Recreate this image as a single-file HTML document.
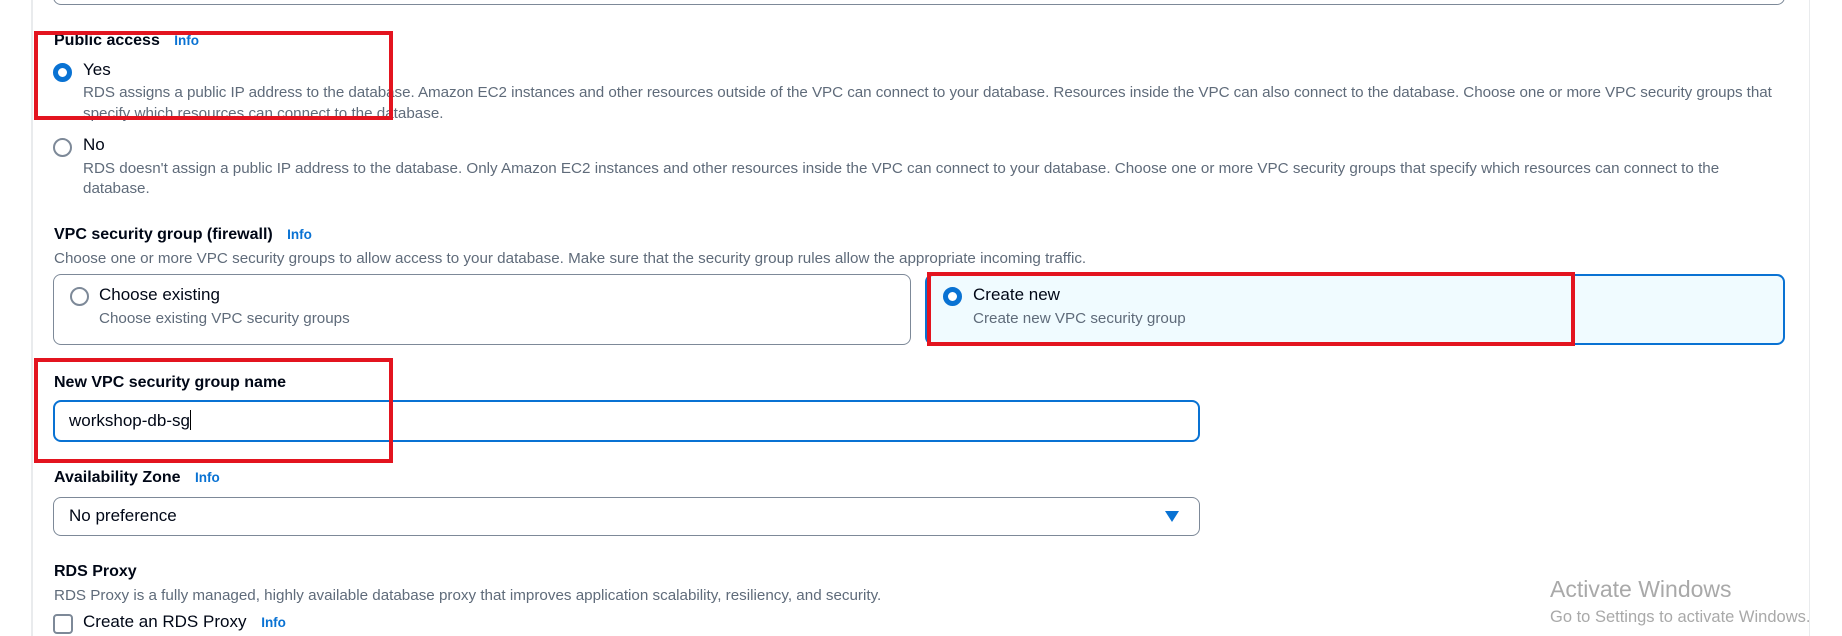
<!DOCTYPE html>
<html><head><meta charset="utf-8"><style>
*{margin:0;padding:0;box-sizing:border-box}
body{width:1842px;height:636px;overflow:hidden;background:#fff;font-family:"Liberation Sans",sans-serif;color:#000716;position:relative}
.a{position:absolute;white-space:nowrap}
.h{font-weight:bold;font-size:16px}
.info{color:#0972d3;font-weight:bold;font-size:13.5px}
.d{font-size:15.2px;color:#5f6b7a}
.l{font-size:17px}
.radio{position:absolute;width:19px;height:19px;border-radius:50%;border:2px solid #7d8998;background:#fff}
.radio.on{border:5.5px solid #0972d3}
.red{position:absolute;border:4px solid #e3141f}
</style></head><body>
<div class="a" style="left:31px;top:0;width:2px;height:636px;background:#e9ebed"></div>
<div class="a" style="left:1809px;top:0;width:1px;height:636px;background:#e9ebed"></div>
<div class="a" style="left:53px;top:-20px;width:1732px;height:25px;border:1px solid #7d8998;border-top:none;border-radius:0 0 8px 8px"></div>

<div class="a h" style="left:54px;top:32px">Public access <span class="info" style="margin-left:10px">Info</span></div>
<div class="radio on" style="left:53px;top:63px"></div>
<div class="a l" style="left:83px;top:60px">Yes</div>
<div class="a d" style="left:83px;top:84px;letter-spacing:-0.05px">RDS assigns a public IP address to the database. Amazon EC2 instances and other resources outside of the VPC can connect to your database. Resources inside the VPC can also connect to the database. Choose one or more VPC security groups that</div>
<div class="a d" style="left:83px;top:105px">specify which resources can connect to the database.</div>

<div class="radio" style="left:53px;top:138px"></div>
<div class="a l" style="left:83px;top:135px">No</div>
<div class="a d" style="left:83px;top:160px">RDS doesn't assign a public IP address to the database. Only Amazon EC2 instances and other resources inside the VPC can connect to your database. Choose one or more VPC security groups that specify which resources can connect to the</div>
<div class="a d" style="left:83px;top:180px">database.</div>

<div class="a h" style="left:54px;top:226px">VPC security group (firewall) <span class="info" style="margin-left:10px">Info</span></div>
<div class="a d" style="left:54px;top:250px">Choose one or more VPC security groups to allow access to your database. Make sure that the security group rules allow the appropriate incoming traffic.</div>

<div class="a" style="left:53px;top:274px;width:858px;height:71px;border:1px solid #7d8998;border-radius:8px"></div>
<div class="radio" style="left:70px;top:287px"></div>
<div class="a l" style="left:99px;top:285px">Choose existing</div>
<div class="a d" style="left:99px;top:310px">Choose existing VPC security groups</div>

<div class="a" style="left:925px;top:274px;width:860px;height:71px;border:2px solid #0972d3;border-radius:8px;background:#f0fbff"></div>
<div class="radio on" style="left:943px;top:287px"></div>
<div class="a l" style="left:973px;top:285px">Create new</div>
<div class="a d" style="left:973px;top:310px">Create new VPC security group</div>

<div class="a h" style="left:54px;top:374px">New VPC security group name</div>
<div class="a" style="left:53px;top:400px;width:1147px;height:42px;border:2px solid #0972d3;border-radius:8px"></div>
<div class="a l" style="left:69px;top:410px">workshop-db-sg<span style="display:inline-block;width:1px;height:20px;background:#000;vertical-align:-4px"></span></div>

<div class="a h" style="left:54px;top:469px">Availability Zone <span class="info" style="margin-left:10px">Info</span></div>
<div class="a" style="left:53px;top:497px;width:1147px;height:39px;border:1px solid #7d8998;border-radius:8px"></div>
<div class="a l" style="left:69px;top:506px">No preference</div>
<div class="a" style="left:1165px;top:511px;width:0;height:0;border-left:7px solid transparent;border-right:7px solid transparent;border-top:11px solid #0972d3"></div>

<div class="a h" style="left:54px;top:563px">RDS Proxy</div>
<div class="a d" style="left:54px;top:587px">RDS Proxy is a fully managed, highly available database proxy that improves application scalability, resiliency, and security.</div>
<div class="a" style="left:53px;top:614px;width:20px;height:20px;border:2px solid #7d8998;border-radius:4px"></div>
<div class="a l" style="left:83px;top:612px">Create an RDS Proxy <span class="info" style="margin-left:10px">Info</span></div>

<div class="a" style="left:1550px;top:576px;font-size:23px;color:#a9a9a9">Activate Windows</div>
<div class="a" style="left:1550px;top:608px;font-size:16.5px;color:#a9a9a9">Go to Settings to activate Windows.</div>

<div class="red" style="left:34px;top:31px;width:359px;height:89px"></div>
<div class="red" style="left:927px;top:272px;width:648px;height:74px"></div>
<div class="red" style="left:34px;top:358px;width:359px;height:105px"></div>
</body></html>
